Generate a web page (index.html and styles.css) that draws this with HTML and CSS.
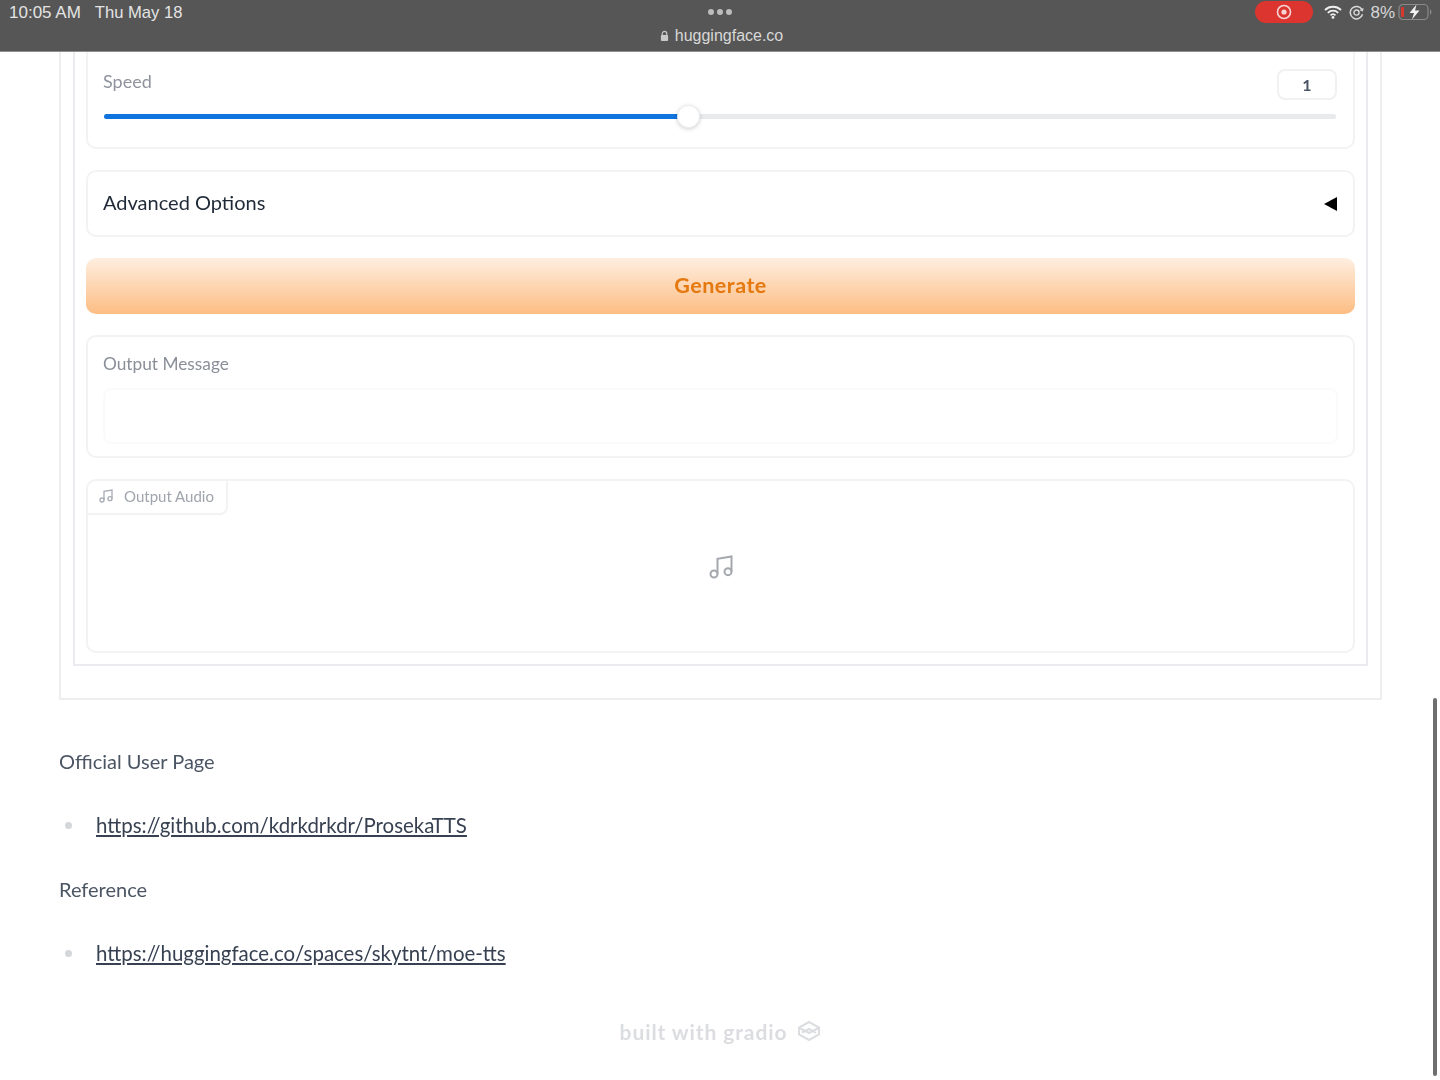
FILE: index.html
```html
<!DOCTYPE html>
<html lang="en">
<head>
<meta charset="utf-8">
<title>ProsekaTTS</title>
<link rel="stylesheet" href="styles.css">
</head>
<body>
<div class="screen">
  <header class="statusbar">
    <div class="status-left"><span class="time">10:05 AM</span><span class="date">Thu May 18</span></div>
    <div class="status-center">
      <div class="dots"><i></i><i></i><i></i></div>
      <div class="url">
        <svg class="lock" viewBox="0 0 10 12" width="9" height="12"><path d="M2.5 5V3.4a2.5 2.5 0 0 1 5 0V5" fill="none" stroke="#c9c9c9" stroke-width="1.3"/><rect x="1" y="5" width="8" height="6.500" rx="1" fill="#c9c9c9"/></svg>
        <span>huggingface.co</span>
      </div>
    </div>
    <div class="status-right">
      <div class="rec"><svg viewBox="0 0 16 16" width="16" height="16"><circle cx="8" cy="8" r="6.500" fill="none" stroke="#f5d5d2" stroke-width="1.600"/><circle cx="8" cy="8" r="2.600" fill="#f5d5d2"/></svg></div>
      <svg class="wifi" viewBox="0 0 18 14" width="18" height="14"><path d="M1 5a11.500 11.500 0 0 1 16 0M3.800 7.800a7.500 7.500 0 0 1 10.400 0M6.500 10.300a3.600 3.600 0 0 1 5 0" fill="none" stroke="#f0f0f0" stroke-width="1.800"/><circle cx="9" cy="12.400" r="1.400" fill="#f0f0f0"/></svg>
      <svg class="orient" viewBox="0 0 14 14" width="15" height="15"><path d="M12.600 8.600A5.800 5.800 0 1 1 12 4.200" fill="none" stroke="#d8d8d8" stroke-width="1.400"/><path d="M13.600 2.600l-.6 3.400-3.200-1.200z" fill="#d8d8d8"/><circle cx="7" cy="7" r="2.400" fill="none" stroke="#d8d8d8" stroke-width="1.300"/></svg>
      <span class="pct">8%</span>
      <svg class="battery" viewBox="0 0 36 18" width="36" height="18"><rect x="1" y="1.500" width="29" height="15" rx="4" fill="none" stroke="#8a8a8a" stroke-width="1.200"/><rect x="3" y="4" width="3" height="10" rx="1" fill="#d8392f"/><path d="M32 6.500c2 .6 2 4.400 0 5z" fill="#8a8a8a"/><path d="M18.500 1.500L11.500 10h4.500l-2 6.500L21.500 7.500H17z" fill="#f4f4f4"/></svg>
    </div>
  </header>

  <main class="page">
    <section class="outer">
      <div class="inner">
        <div class="card card-speed">
          <div class="speed-head">
            <span class="label">Speed</span>
            <span class="number">1</span>
          </div>
          <div class="slider">
            <div class="slider-fill"></div>
            <div class="slider-thumb"></div>
          </div>
        </div>
        <div class="card card-advanced">
          <span class="adv-title">Advanced Options</span>
          <span class="adv-caret"></span>
        </div>
        <button class="generate">Generate</button>
        <div class="card card-output">
          <span class="label">Output Message</span>
          <div class="output-field"></div>
        </div>
        <div class="card card-audio">
          <div class="audio-tab">
            <svg viewBox="0 0 24 24" width="16" height="16" class="note-small"><path d="M9 18V5l12-2v13" fill="none" stroke="#a9adb6" stroke-width="2"/><circle cx="6" cy="18" r="3" fill="none" stroke="#a9adb6" stroke-width="2"/><circle cx="18" cy="16" r="3" fill="none" stroke="#a9adb6" stroke-width="2"/></svg>
            <span>Output Audio</span>
          </div>
          <div class="audio-empty">
            <svg viewBox="0 0 24 24" width="28" height="28"><path d="M9 18V5l12-2v13" fill="none" stroke="#a4a7ad" stroke-width="1.700"/><circle cx="6" cy="18" r="3" fill="none" stroke="#a4a7ad" stroke-width="1.700"/><circle cx="18" cy="16" r="3" fill="none" stroke="#a4a7ad" stroke-width="1.700"/></svg>
          </div>
        </div>
      </div>
    </section>

    <section class="prose">
      <p>Official User Page</p>
      <ul><li><a href="#">https://github.com/kdrkdrkdr/ProsekaTTS</a></li></ul>
      <p>Reference</p>
      <ul><li><a href="#">https://huggingface.co/spaces/skytnt/moe-tts</a></li></ul>
    </section>

    <footer class="built">
      <span>built with gradio</span>
      <svg viewBox="0 0 24 22" width="24" height="22"><path d="M12 2l10 5.500v7L12 20 2 14.500v-7z" fill="none" stroke="#dcdde0" stroke-width="2"/><path d="M2.500 8l9.500 5 9.500-5M5 12.500L12 9l7 4" fill="none" stroke="#dcdde0" stroke-width="2"/></svg>
    </footer>
  </main>
  <div class="scrollbar"></div>
</div>
</body>
</html>
```
FILE: styles.css
```css
* { box-sizing: border-box; }
html, body { margin: 0; padding: 0; background: #fff; }
body { font-family: "Lato", "Noto Sans", sans-serif; color: #374151; }

.screen { position: relative; width: 1440px; height: 1080px; overflow: hidden; filter: blur(0.7px); }

.statusbar {
  height: 52px;
  background: #565656;
  border-bottom: 1px solid #8f8f8f;
  display: grid;
  grid-template-columns: 1fr 200px 1fr;
  padding: 0 6px 0 9px;
  color: #e4e4e4;
  font-family: "Liberation Sans", sans-serif;
}
.status-left { display: flex; gap: 14px; line-height: 24px; padding-top: 1px; }
.time { font-size: 17px; }
.date { font-size: 16.600px; }
.status-center { display: flex; flex-direction: column; align-items: center; }
.dots { display: flex; gap: 3px; height: 24px; align-items: center; margin-left: -3px; }
.dots i { width: 6px; height: 6px; border-radius: 50%; background: #bdbdbd; }
.url { display: flex; align-items: center; gap: 6px; font-size: 16px; line-height: 22px; color: #d8d8d8; padding-top: 1px; }
.status-right { display: flex; justify-content: flex-end; align-items: flex-start; height: 24px; }
.rec { width: 58px; height: 22px; margin-top: 1px; background: #dc3530; border-radius: 11px; display: flex; align-items: center; justify-content: center; margin-right: 11px; }
.wifi { margin-top: 5px; margin-right: 7px; }
.orient { margin-top: 5px; margin-right: 6px; }
.pct { font-size: 17px; line-height: 24px; color: #d8d8d8; margin-right: 3px; padding-top: 1px; }
.battery { margin-top: 3px; }

.page { padding: 0 58px 0 59px; }

.outer {
  border: 2px solid #eceef0;
  border-top: 0;
  padding: 0 12px 32px;
  height: 648px;
}
.inner {
  border: 2px solid #e9ebee;
  border-top: 0;
  padding: 0 11px 11px;
  display: flex;
  flex-direction: column;
  gap: 21px;
}
.card { border: 2px solid #f2f3f5; border-radius: 10px; background: #fff; }

.card-speed { height: 97px; padding: 17px 16px 0 15px; border-top: 0; border-top-left-radius: 0; border-top-right-radius: 0; }
.speed-head { display: flex; justify-content: space-between; align-items: flex-start; height: 30px; }
.label { font-size: 18px; line-height: 24px; color: #8e939c; }
.number { width: 60px; height: 31px; border: 2px solid #f0f1f3; border-radius: 8px; text-align: center; font-size: 16px; line-height: 28px; color: #4b5563; font-weight: 700; }

.slider { position: relative; height: 5px; margin: 15px 1px 0; background: #e9eaec; border-radius: 3px; }
.slider-fill { width: 584px; height: 100%; background: #0f74de; border-radius: 3px; }
.slider-thumb {
  position: absolute; left: 573px; top: -9px;
  width: 23px; height: 23px; border-radius: 50%;
  background: #fff; border: 1px solid #eceef0;
  box-shadow: 0 1px 4px rgba(0,0,0,.18);
}

.card-advanced { height: 67px; padding: 0 16px 3px 15px; display: flex; align-items: center; justify-content: space-between; }
.adv-title { font-size: 20px; color: #1f2937; }
.adv-caret { width: 0; height: 0; border-style: solid; border-width: 7px 13px 7px 0; border-color: transparent #000 transparent transparent; margin-top: 3px; }

.generate {
  height: 56px; width: 100%;
  border: 0; border-radius: 10px;
  background: linear-gradient(to bottom, #feeee0, #fdbd83);
  color: #e5780e;
  font-family: "Lato", sans-serif; font-size: 21.500px; font-weight: 700; letter-spacing: .5px;
  padding: 0 0 2px;
}

.card-output { height: 123px; padding: 15px 15px 0; display: flex; flex-direction: column; }
.card-output .label { color: #8a8f98; font-size: 17.300px; }
.output-field { height: 56px; margin-top: 12px; border: 2px solid #fafafb; border-radius: 8px; }

.card-audio { height: 174px; position: relative; }
.audio-tab {
  display: inline-flex; align-items: center; gap: 10px;
  height: 34px; width: 140px; padding-left: 10px; padding-bottom: 3px;
  border-right: 2px solid #f2f3f5; border-bottom: 2px solid #f2f3f5;
  border-bottom-right-radius: 8px;
  font-size: 15px; color: #a0a4ac;
}
.audio-empty { display: flex; justify-content: center; padding-top: 38px; }

.prose { margin-top: 48px; font-size: 20px; line-height: 26px; color: #4b5563; }
.prose p { margin: 0; height: 26px; }
.prose ul { list-style: none; margin: 38px 0; padding: 0 0 0 37px; position: relative; }
.prose li { height: 26px; color: #374151; font-size: 20.450px; }
.prose li::before { content: ""; position: absolute; left: 6px; top: 10px; width: 7px; height: 7px; border-radius: 50%; background: #d4d6da; }
.prose a { color: #374151; text-decoration: underline; }

.built { margin-top: 50px; display: flex; justify-content: center; align-items: center; gap: 10px; font-size: 21px; font-weight: 700; letter-spacing: .9px; color: #dcdde0; height: 30px; }

.scrollbar { position: absolute; left: 1433px; top: 698px; width: 4px; height: 378px; border-radius: 2px; background: #6e6e6e; }
```
